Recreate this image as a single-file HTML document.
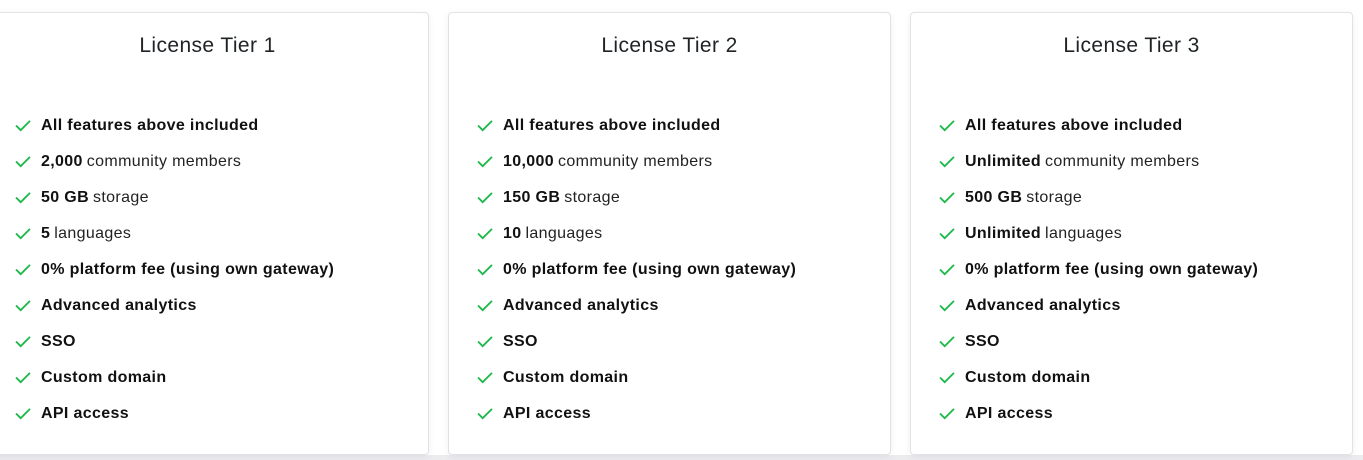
<!DOCTYPE html>
<html><head><style>
body{margin:0;width:1363px;height:460px;background:#fff;position:relative;overflow:hidden;font-family:"Liberation Sans",Arial,sans-serif;color:#1a1a1a}
.bg{position:absolute;left:0;right:0;top:455px;bottom:0;background:#ececef}
.card{position:absolute;top:12px;width:441px;height:441px;background:#fff;border:1px solid #e2e2e6;border-radius:4px;box-shadow:0 2px 8px rgba(0,0,0,.06)}
.card h2{margin:0;position:absolute;top:21px;left:0;right:0;text-align:center;font-weight:400;font-size:21px;letter-spacing:0.4px;color:#1f2326}
ul{list-style:none;margin:0;padding:0;position:absolute;top:103px;left:28px}
li{height:36px;line-height:20px;font-size:16px;letter-spacing:0.35px;display:flex;align-items:flex-start;color:#222}
li svg{width:16px;height:13px;margin:3px 10px 0 0;flex:none}
b{font-weight:700;color:#111;margin-right:4px}
</style></head><body>
<div class="bg"></div>
<div class="card" style="left:-14px"><h2>License Tier 1</h2><ul>
<li><svg viewBox="0 0 17 14"><path d="M1 7l5 5L16 2" fill="none" stroke="#1cb94a" stroke-width="2"/></svg><b>All features above included</b></li>
<li><svg viewBox="0 0 17 14"><path d="M1 7l5 5L16 2" fill="none" stroke="#1cb94a" stroke-width="2"/></svg><b>2,000</b>community members</li>
<li><svg viewBox="0 0 17 14"><path d="M1 7l5 5L16 2" fill="none" stroke="#1cb94a" stroke-width="2"/></svg><b>50 GB</b>storage</li>
<li><svg viewBox="0 0 17 14"><path d="M1 7l5 5L16 2" fill="none" stroke="#1cb94a" stroke-width="2"/></svg><b>5</b>languages</li>
<li><svg viewBox="0 0 17 14"><path d="M1 7l5 5L16 2" fill="none" stroke="#1cb94a" stroke-width="2"/></svg><b>0% platform fee (using own gateway)</b></li>
<li><svg viewBox="0 0 17 14"><path d="M1 7l5 5L16 2" fill="none" stroke="#1cb94a" stroke-width="2"/></svg><b>Advanced analytics</b></li>
<li><svg viewBox="0 0 17 14"><path d="M1 7l5 5L16 2" fill="none" stroke="#1cb94a" stroke-width="2"/></svg><b>SSO</b></li>
<li><svg viewBox="0 0 17 14"><path d="M1 7l5 5L16 2" fill="none" stroke="#1cb94a" stroke-width="2"/></svg><b>Custom domain</b></li>
<li><svg viewBox="0 0 17 14"><path d="M1 7l5 5L16 2" fill="none" stroke="#1cb94a" stroke-width="2"/></svg><b>API access</b></li>
</ul></div>
<div class="card" style="left:448px"><h2>License Tier 2</h2><ul>
<li><svg viewBox="0 0 17 14"><path d="M1 7l5 5L16 2" fill="none" stroke="#1cb94a" stroke-width="2"/></svg><b>All features above included</b></li>
<li><svg viewBox="0 0 17 14"><path d="M1 7l5 5L16 2" fill="none" stroke="#1cb94a" stroke-width="2"/></svg><b>10,000</b>community members</li>
<li><svg viewBox="0 0 17 14"><path d="M1 7l5 5L16 2" fill="none" stroke="#1cb94a" stroke-width="2"/></svg><b>150 GB</b>storage</li>
<li><svg viewBox="0 0 17 14"><path d="M1 7l5 5L16 2" fill="none" stroke="#1cb94a" stroke-width="2"/></svg><b>10</b>languages</li>
<li><svg viewBox="0 0 17 14"><path d="M1 7l5 5L16 2" fill="none" stroke="#1cb94a" stroke-width="2"/></svg><b>0% platform fee (using own gateway)</b></li>
<li><svg viewBox="0 0 17 14"><path d="M1 7l5 5L16 2" fill="none" stroke="#1cb94a" stroke-width="2"/></svg><b>Advanced analytics</b></li>
<li><svg viewBox="0 0 17 14"><path d="M1 7l5 5L16 2" fill="none" stroke="#1cb94a" stroke-width="2"/></svg><b>SSO</b></li>
<li><svg viewBox="0 0 17 14"><path d="M1 7l5 5L16 2" fill="none" stroke="#1cb94a" stroke-width="2"/></svg><b>Custom domain</b></li>
<li><svg viewBox="0 0 17 14"><path d="M1 7l5 5L16 2" fill="none" stroke="#1cb94a" stroke-width="2"/></svg><b>API access</b></li>
</ul></div>
<div class="card" style="left:910px"><h2>License Tier 3</h2><ul>
<li><svg viewBox="0 0 17 14"><path d="M1 7l5 5L16 2" fill="none" stroke="#1cb94a" stroke-width="2"/></svg><b>All features above included</b></li>
<li><svg viewBox="0 0 17 14"><path d="M1 7l5 5L16 2" fill="none" stroke="#1cb94a" stroke-width="2"/></svg><b>Unlimited</b>community members</li>
<li><svg viewBox="0 0 17 14"><path d="M1 7l5 5L16 2" fill="none" stroke="#1cb94a" stroke-width="2"/></svg><b>500 GB</b>storage</li>
<li><svg viewBox="0 0 17 14"><path d="M1 7l5 5L16 2" fill="none" stroke="#1cb94a" stroke-width="2"/></svg><b>Unlimited</b>languages</li>
<li><svg viewBox="0 0 17 14"><path d="M1 7l5 5L16 2" fill="none" stroke="#1cb94a" stroke-width="2"/></svg><b>0% platform fee (using own gateway)</b></li>
<li><svg viewBox="0 0 17 14"><path d="M1 7l5 5L16 2" fill="none" stroke="#1cb94a" stroke-width="2"/></svg><b>Advanced analytics</b></li>
<li><svg viewBox="0 0 17 14"><path d="M1 7l5 5L16 2" fill="none" stroke="#1cb94a" stroke-width="2"/></svg><b>SSO</b></li>
<li><svg viewBox="0 0 17 14"><path d="M1 7l5 5L16 2" fill="none" stroke="#1cb94a" stroke-width="2"/></svg><b>Custom domain</b></li>
<li><svg viewBox="0 0 17 14"><path d="M1 7l5 5L16 2" fill="none" stroke="#1cb94a" stroke-width="2"/></svg><b>API access</b></li>
</ul></div>
</body></html>
